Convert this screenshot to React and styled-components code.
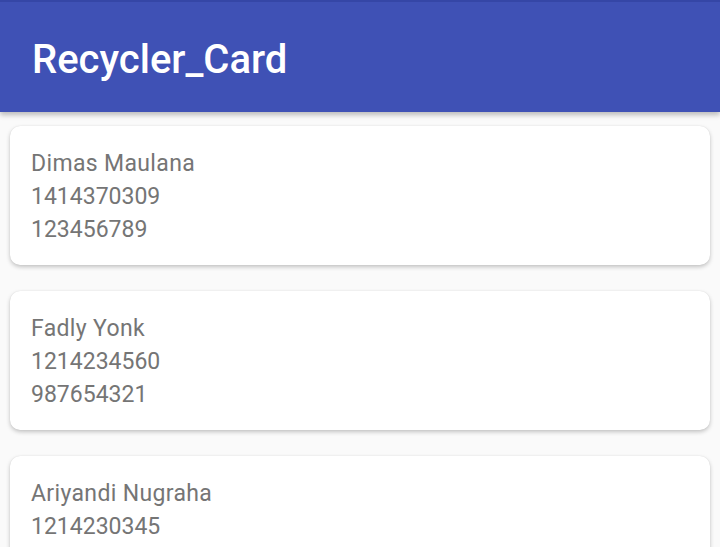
import React from "react";
import styled, { createGlobalStyle } from "styled-components";

const GlobalStyle = createGlobalStyle`
    html, body {
        margin: 0;
        padding: 0;
        background: #FAFAFA;
        font-family: Roboto, "Noto Sans", sans-serif;
    }
`;

const Page = styled.div`
    width: 720px;
    height: 547px;
    overflow: hidden;
    background: #FAFAFA;
`;

const AppBar = styled.header`
    position: relative;
    z-index: 1;
    display: flex;
    align-items: center;
    height: 110px;
    padding: 0 33px;
    background: #3F51B5;
    border-top: 2px solid #3546A6;
    box-shadow: 0 3px 5px rgba(0, 0, 0, 0.25);
`;

const Title = styled.h1`
    margin: 6px 0 0 -1px;
    color: #FFFFFF;
    font-size: 40px;
    font-weight: 500;
    line-height: 1;
`;

const List = styled.div`
    display: flex;
    flex-direction: column;
    gap: 26px;
    padding: 14px 10px 0;
`;

const Card = styled.div`
    display: flex;
    flex-direction: column;
    height: 139px;
    box-sizing: border-box;
    padding: 21px 21px 0;
    border-radius: 10px;
    background: #FFFFFF;
    box-shadow: 0 2px 4px rgba(0, 0, 0, 0.22), 0 0 1px rgba(0, 0, 0, 0.12);
`;

const Line = styled.span`
    font-size: 23px;
    line-height: 33px;
    letter-spacing: ${(props) => (props.$numeric ? "0" : "0.35px")};
    color: #757575;
`;

const contacts = [
    { name: "Dimas Maulana", nim: "1414370309", phone: "123456789" },
    { name: "Fadly Yonk", nim: "1214234560", phone: "987654321" },
    { name: "Ariyandi Nugraha", nim: "1214230345", phone: "123456789" },
];

const App = () => (
    <Page>
        <GlobalStyle />
        <AppBar>
            <Title>Recycler_Card</Title>
        </AppBar>
        <List>
            {contacts.map((c) => (
                <Card key={c.name}>
                    <Line>{c.name}</Line>
                    <Line $numeric>{c.nim}</Line>
                    <Line $numeric>{c.phone}</Line>
                </Card>
            ))}
        </List>
    </Page>
);

export default App;
